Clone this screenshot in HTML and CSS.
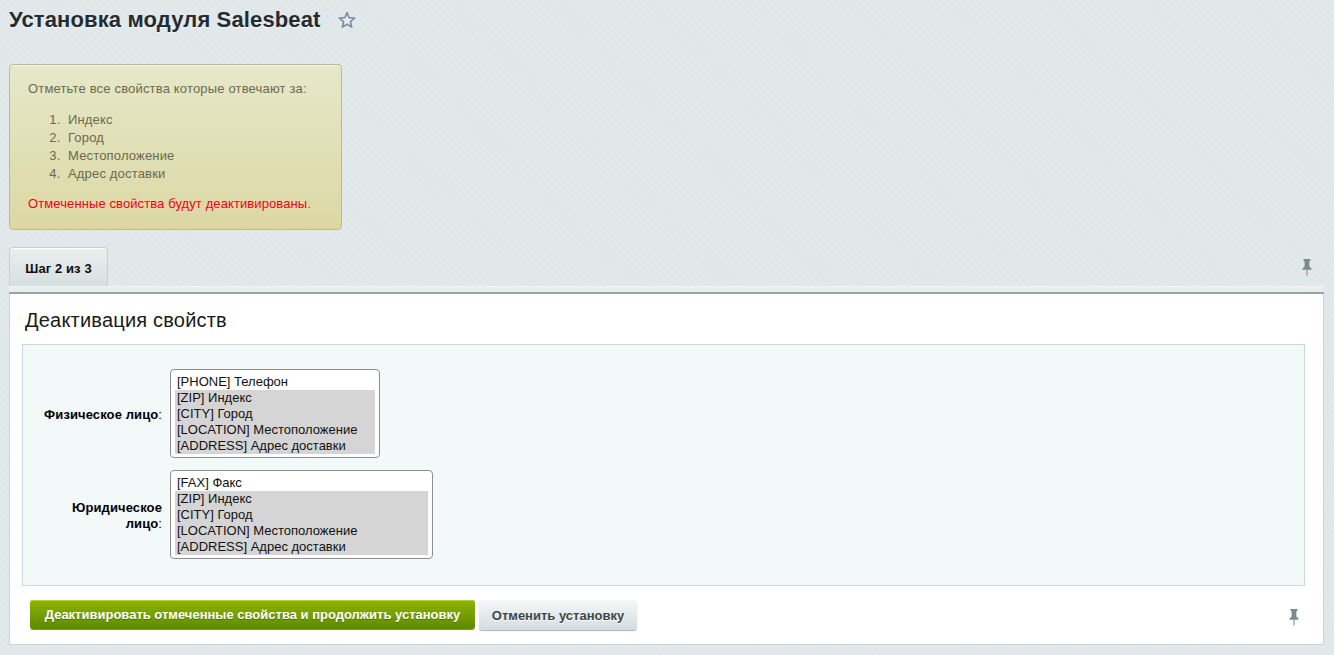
FILE: index.html
```html
<!DOCTYPE html>
<html lang="ru">
<head>
<meta charset="utf-8">
<title>Установка модуля Salesbeat</title>
<link rel="stylesheet" href="styles.css">
</head>
<body>
<header class="title-row">
  <h1 class="title">Установка модуля Salesbeat</h1>
  <svg class="star" viewBox="0 0 18 18" width="18" height="18" aria-hidden="true"><path d="M9 1.6l2.1 5.1 5.5.4-4.2 3.6 1.3 5.4L9 13.2l-4.7 2.9 1.3-5.4-4.2-3.6 5.5-.4z" fill="#e6ecf0" stroke="#7f8ea6" stroke-width="1.7" stroke-linejoin="round"/></svg>
</header>

<aside class="note">
  <p class="note-lead">Отметьте все свойства которые отвечают за:</p>
  <ol class="note-list">
    <li>Индекс</li>
    <li>Город</li>
    <li>Местоположение</li>
    <li>Адрес доставки</li>
  </ol>
  <p class="note-warn"><span class="red">Отмеченные свойства будут деактивированы</span>.</p>
</aside>

<nav class="tabs">
  <div class="tab">Шаг 2 из 3</div>
  <svg class="pin pin-top" viewBox="0 0 12 18" width="12" height="18" aria-hidden="true"><path d="M2.5 1h7v1.6L8.4 3.4v5.2l2.1 2v1.2h-9v-1.2l2.1-2V3.4L2.5 2.6z" fill="#7d8a90"/><rect x="5.4" y="11.5" width="1.2" height="6" fill="#8b979c"/></svg>
</nav>
<div class="strip"></div>

<main class="panel">
  <h2 class="panel-title">Деактивация свойств</h2>
  <form class="fields">
    <label class="field-label" for="p1"><b>Физическое лицо</b>:</label>
    <select class="multi multi-a" id="p1" multiple size="5">
      <option>[PHONE] Телефон</option>
      <option selected>[ZIP] Индекс</option>
      <option selected>[CITY] Город</option>
      <option selected>[LOCATION] Местоположение</option>
      <option selected>[ADDRESS] Адрес доставки</option>
    </select>
    <label class="field-label" for="p2"><b>Юридическое лицо</b>:</label>
    <select class="multi multi-b" id="p2" multiple size="5">
      <option>[FAX] Факс</option>
      <option selected>[ZIP] Индекс</option>
      <option selected>[CITY] Город</option>
      <option selected>[LOCATION] Местоположение</option>
      <option selected>[ADDRESS] Адрес доставки</option>
    </select>
  </form>
  <footer class="actions">
    <button class="btn btn-green" type="button">Деактивировать отмеченные свойства и продолжить установку</button>
    <button class="btn btn-gray" type="button">Отменить установку</button>
    <svg class="pin pin-bottom" viewBox="0 0 12 18" width="12" height="18" aria-hidden="true"><path d="M2.5 1h7v1.6L8.4 3.4v5.2l2.1 2v1.2h-9v-1.2l2.1-2V3.4L2.5 2.6z" fill="#7d8a90"/><rect x="5.4" y="11.5" width="1.2" height="6" fill="#8b979c"/></svg>
  </footer>
</main>
</body>
</html>
```

FILE: styles.css
```css
* { box-sizing: border-box; }

html, body { height: 100%; }

body {
  margin: 0;
  padding: 0 10px 10px 9px;
  font-family: "Liberation Sans", Arial, sans-serif;
  font-size: 13px;
  color: #000;
  background-color: #e2e9eb;
  background-image:
    repeating-linear-gradient(45deg, rgba(255,255,255,.025) 0 2px, rgba(0,0,0,.003) 2px 5px),
    repeating-linear-gradient(-45deg, rgba(255,255,255,.02) 0 2px, rgba(0,0,0,.003) 2px 6px);
  overflow: hidden;
}

.title-row {
  display: flex;
  align-items: center;
  height: 40px;
  margin-bottom: 24px;
}

.title {
  margin: 0;
  font-size: 22px;
  font-weight: 700;
  letter-spacing: .13px;
  line-height: 24px;
  color: #262b2f;
  text-shadow: 0 1px 0 rgba(255,255,255,.6);
}

.star { margin-left: 17px; flex: none; }

.note {
  width: 333px;
  height: 166px;
  padding: 15px 18px 0;
  border: 1px solid #c4b982;
  border-radius: 4px;
  background: linear-gradient(#e6e8c9, #dcd7a4);
  box-shadow: inset 0 1px 0 rgba(255,255,255,.55);
  color: #6c6a4e;
  line-height: 18px;
  letter-spacing: .17px;
}

.note-lead { margin: 0 0 13px; }

.note-list {
  margin: 0 0 12px;
  padding: 0 0 0 40px;
}

.note-list li::marker {
  content: counter(list-item) ".\00a0\00a0";
}

.note-warn { margin: 0; letter-spacing: .1px; }

.red { color: #f5000f; }

.tabs {
  display: flex;
  justify-content: space-between;
  align-items: flex-start;
  height: 39px;
  margin-top: 17px;
}

.tab {
  width: 99px;
  height: 39px;
  padding-top: 13px;
  text-align: center;
  font-weight: 700;
  letter-spacing: .1px;
  line-height: 16px;
  color: #0e0e0e;
  border: 1px solid #c4d0d4;
  border-bottom: 0;
  border-radius: 4px 4px 0 0;
  background: linear-gradient(#eaefef, #d6dfe0);
  box-shadow: inset 0 1px 0 #fff;
}

.pin { display: block; flex: none; }
.pin-top { margin: 11px 11px 0 0; }

.strip {
  height: 8px;
  background: #e9edee;
  border-bottom: 2px solid #9aa4a7;
  border-top: 1px solid #f2f5f5;
}

.panel {
  height: 351px;
  padding: 14px 18px 0 12px;
  background: #fff;
  border: solid #c9d4d8;
  border-width: 0 1px 1px;
}

.panel-title {
  margin: 0 0 12px 3px;
  font-size: 20px;
  font-weight: 400;
  letter-spacing: .2px;
  line-height: 24px;
  color: #1a1a1a;
}

.fields {
  display: grid;
  grid-template-columns: 119px max-content;
  column-gap: 8px;
  row-gap: 12px;
  align-items: center;
  align-content: start;
  height: 242px;
  padding: 24px 0 0 20px;
  background: #f3f8f8;
  border: 1px solid #c8d9dd;
}

.field-label {
  padding-top: 3px;
  text-align: right;
  line-height: 16px;
  letter-spacing: .1px;
}

.multi {
  display: block;
  height: 89px;
  padding: 4px 4px 3px;
  margin: 0;
  border: 1px solid #8d8d8d;
  border-radius: 4px;
  background: #fff;
  overflow: hidden;
  font-family: "Liberation Sans", Arial, sans-serif;
  font-size: 13px;
  color: #111;
}

.multi-a { width: 210px; }
.multi-b { width: 263px; }

.multi option {
  height: 16px;
  min-height: 16px;
  padding: 0 2px;
  line-height: 16px;
  color: #111;
}

.multi option:checked {
  background: linear-gradient(#d5d5d5, #d5d5d5);
  color: #111;
}

.actions {
  display: flex;
  align-items: flex-start;
  gap: 4px;
  padding: 14px 0 0 8px;
}

.btn {
  height: 29px;
  margin: 0;
  padding: 0;
  border: 0;
  border-radius: 3px;
  font-family: "Liberation Sans", Arial, sans-serif;
  font-size: 13px;
  font-weight: 700;
  white-space: nowrap;
}

.btn-green {
  width: 445px;
  color: #fff;
  background: linear-gradient(#8fb400, #5c8a00);
  box-shadow: inset 0 1px 0 #b4d22a, 0 1px 0 #7a9a30;
  text-shadow: 0 1px 0 rgba(40,70,0,.5);
}

.btn-gray {
  width: 158px;
  height: 30px;
  color: #3d4649;
  background: linear-gradient(#f5f8f8, #d3dde1);
  box-shadow: 0 1px 1px #a9b5ba;
  text-shadow: 0 1px 0 #fff;
}

.pin-bottom { margin: 8px 5px 0 auto; }
```
